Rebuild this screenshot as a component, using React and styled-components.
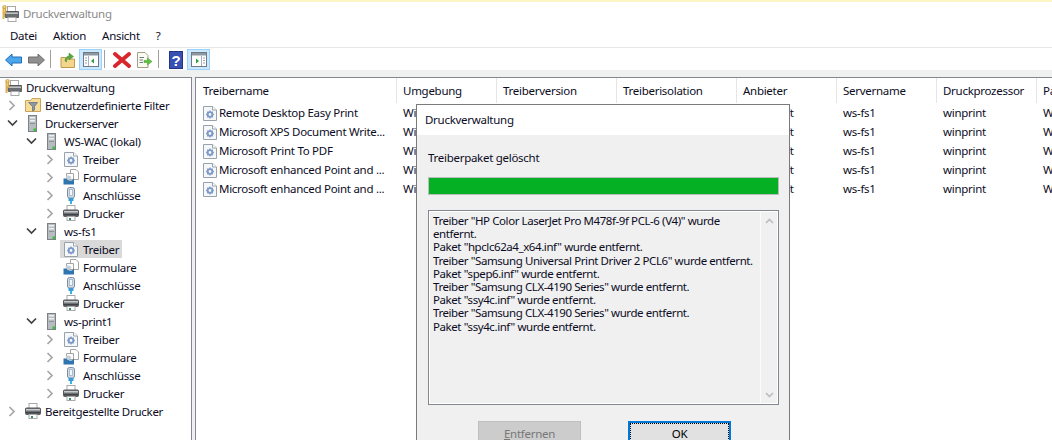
import React from 'react'
import styled, { createGlobalStyle } from 'styled-components'

const GlobalStyle = createGlobalStyle`
    html, body {
        margin: 0;
        padding: 0;
        width: 1052px;
        height: 440px;
        overflow: hidden;
        background: #f0f0f0;
        font-family: 'Noto Sans', 'Open Sans', sans-serif;
        font-size: 11.5px;
        letter-spacing: -0.28px;
        color: #0c0c1e;
    }
`

const Window = styled.div`
    position: relative;
    width: 1052px;
    height: 440px;
    overflow: hidden;
    display: flex;
    flex-direction: column;
    background: #f0f0f0;
    border-top: 2px solid #fdf5c4;
    box-sizing: border-box;
`

const TitleBar = styled.div`
    height: 23px;
    display: flex;
    align-items: center;
    gap: 4px;
    padding-left: 2px;
    background: #fff;
    color: #8a8a8a;
    flex: none;
`

const MenuBar = styled.div`
    height: 22px;
    display: flex;
    align-items: center;
    gap: 16px;
    padding-left: 10px;
    background: #fff;
    border-bottom: 1px solid #e6e6e6;
    flex: none;
`

const MenuItem = styled.span`
    line-height: 20px;
`

const ToolBar = styled.div`
    height: 22px;
    display: flex;
    align-items: flex-end;
    padding-left: 2px;
    background: #fff;
    flex: none;
`

const ToolButton = styled.div`
    width: 23px;
    height: 21px;
    display: flex;
    align-items: center;
    justify-content: center;
    box-sizing: border-box;
    background: ${props => (props.active ? '#cce8ff' : 'transparent')};
    border: 1px solid ${props => (props.active ? '#99d1ff' : 'transparent')};
`

const ToolSep = styled.div`
    width: 1px;
    height: 18px;
    margin: 0 5px 2px 2px;
    background: #a0a0a0;
`

const Panes = styled.div`
    flex: 1;
    display: flex;
    gap: 3px;
    padding-top: 7px;
    min-height: 0;
`

const TreePane = styled.div`
    width: 192px;
    flex: none;
    background: #fff;
    border: 1px solid #828790;
    border-left: 0;
    border-bottom: 0;
    box-sizing: border-box;
`

const TreeRow = styled.div`
    height: 18px;
    display: flex;
    align-items: center;
    padding-left: ${props => props.level * 19 + 5}px;
`

const Chevron = styled.div`
    width: 14px;
    height: 16px;
    margin-right: 6px;
    display: flex;
    align-items: center;
    justify-content: center;
    flex: none;
`

const TreeLabel = styled.div`
    display: flex;
    align-items: center;
    gap: 4px;
    height: 18px;
    padding-right: 3px;
    white-space: nowrap;
    background: ${props => (props.selected ? '#d9d9d9' : 'transparent')};
    margin-left: ${props => (props.selected ? '-3px' : '0')};
    padding-left: ${props => (props.selected ? '3px' : '0')};
`

const ListPane = styled.div`
    flex: 1;
    background: #fff;
    border-top: 1px solid #828790;
    border-left: 1px solid #828790;
    min-width: 0;
    overflow: hidden;
`

const ListRow = styled.div`
    display: grid;
    grid-template-columns: 200px 100px 120px 120px 100px 100px 100px 100px;
    height: ${props => (props.header ? '25px' : '19px')};
`

const HeadCell = styled.div`
    display: flex;
    align-items: center;
    padding-left: 7px;
    box-shadow: 1px 0 0 #e5e5e5;
    white-space: nowrap;
    overflow: hidden;
`

const Cell = styled.div`
    display: flex;
    align-items: center;
    gap: 1px;
    padding-left: ${props => (props.first ? '6px' : '7px')};
    padding-right: 2px;
    white-space: nowrap;
    overflow: hidden;
`

const Vendor = styled.span`
    letter-spacing: 0;
`

const Dialog = styled.div`
    position: absolute;
    left: 416px;
    top: 102px;
    width: 374px;
    height: 360px;
    box-sizing: border-box;
    background: #f0f0f0;
    border: 1px solid #7a7a7a;
    display: flex;
    flex-direction: column;
`

const DialogTitle = styled.div`
    height: 30px;
    background: #fff;
    display: flex;
    align-items: center;
    padding: 0 0 2px 8px;
    box-sizing: border-box;
    flex: none;
`

const DialogBody = styled.div`
    padding: 14px 10px 0 11px;
    display: flex;
    flex-direction: column;
`

const Status = styled.div`
    height: 18px;
    line-height: 17px;
`

const Progress = styled.div`
    height: 18px;
    margin-top: 10px;
    box-sizing: border-box;
    border: 1px solid #bcbcbc;
    background: #06b025;
`

const LogBox = styled.div`
    margin-top: 15px;
    height: 195px;
    box-sizing: border-box;
    border: 1px solid #828790;
    box-shadow: inset 0 0 0 1px #fff;
    display: flex;
    background: #f0f0f0;
`

const LogText = styled.div`
    flex: 1;
    padding: 3px 0 0 4px;
    line-height: 13.2px;
    letter-spacing: -0.42px;
`

const LogScroll = styled.div`
    width: 17px;
    box-sizing: border-box;
    margin: 1px 1px 1px 0;
    border-left: 1px solid #fbfbfb;
    display: flex;
    flex-direction: column;
    justify-content: space-between;
    align-items: center;
    padding: 6px 0 5px;
`

const Buttons = styled.div`
    display: flex;
    gap: 47px;
    margin-top: 16px;
    padding-left: 50px;
`

const Button = styled.div`
    width: 103px;
    height: 24px;
    box-sizing: border-box;
    display: flex;
    align-items: center;
    justify-content: center;
    background: ${props => (props.disabled ? '#cccccc' : '#e1e1e1')};
    color: ${props => (props.disabled ? '#787878' : '#000')};
    border: ${props => (props.primary ? '2px solid #0078d7' : '1px solid #bfbfbf')};
    outline: ${props => (props.primary ? '1px dotted #000' : 'none')};
    outline-offset: -3px;
`

const Mnemonic = styled.span`
    text-decoration: underline;
`

const ChevronRight = () => (
    <svg width="8" height="11" viewBox="0 0 8 11">
        <path d="M1.5 1 L6 5.5 L1.5 10" fill="none" stroke="#a6a6a6" strokeWidth="1.7" />
    </svg>
)

const ChevronDown = () => (
    <svg width="11" height="8" viewBox="0 0 11 8">
        <path d="M1 1.5 L5.5 6 L10 1.5" fill="none" stroke="#404040" strokeWidth="1.7" />
    </svg>
)

const ScrollArrow = ({ up }) => (
    <svg width="9" height="6" viewBox="0 0 9 6">
        <path d={up ? 'M1 5 L4.5 1.5 L8 5' : 'M1 1 L4.5 4.5 L8 1'} fill="none" stroke="#bdbdbd" strokeWidth="1.7" />
    </svg>
)

const DriverIcon = () => (
    <svg width="16" height="16" viewBox="0 0 16 16" style={{ flex: 'none' }}>
        <path d="M1.5 1.5 H10.5 L14.5 5 V15.5 H1.5 Z" fill="#f6f7f8" stroke="#98a2ac" />
        <path d="M10.5 1.5 V5 H14.5" fill="#fff" stroke="#98a2ac" />
        <circle cx="8" cy="9.5" r="2.3" fill="none" stroke="#7c9ac9" strokeWidth="1.8" />
        <path d="M8 5.6 V7 M8 12 V13.4 M4.1 9.5 H5.5 M10.5 9.5 H11.9 M5.3 6.8 L6.2 7.7 M9.8 11.3 L10.7 12.2 M10.7 6.8 L9.8 7.7 M6.2 11.3 L5.3 12.2" stroke="#7c9ac9" strokeWidth="1.3" />
    </svg>
)

const FormsIcon = () => (
    <svg width="16" height="16" viewBox="0 0 16 16" style={{ flex: 'none' }}>
        <path d="M7.5 0.5 H13 L15.5 3 V10.5 H7.5 Z" fill="#fff" stroke="#a5a5a5" />
        <path d="M3.5 4.5 H10.5 V10.5 H3.5 Z" fill="#fff" stroke="#a5a5a5" />
        <path d="M0.5 9.5 H4 L6 11.5 H9 L11 9.5 V15.5 H0.5 Z" fill="#2e75b0" />
        <path d="M2.5 8 C3.5 6 7 6 8.5 8.5 L6 11 H4.5 Z" fill="#c7cfd6" />
    </svg>
)

const PortIcon = () => (
    <svg width="16" height="17" viewBox="0 0 16 17" style={{ flex: 'none' }}>
        <rect x="4.5" y="0.5" width="7" height="10.5" rx="2" fill="#cfdbe8" stroke="#7d8ea3" />
        <rect x="6.5" y="2.5" width="3" height="6" fill="#f4f7fa" stroke="#9aa9ba" strokeWidth="0.7" />
        <rect x="5.5" y="11" width="5" height="3" fill="#3a9bd8" />
        <rect x="7" y="14" width="2" height="3" fill="#36b4e6" />
    </svg>
)

const PrinterIcon = () => (
    <svg width="16" height="16" viewBox="0 0 16 16" style={{ flex: 'none' }}>
        <rect x="4" y="0.5" width="8" height="5" fill="#fff" stroke="#a9a9a9" />
        <rect x="0.5" y="5" width="15" height="6.5" rx="1" fill="#6e7276" stroke="#54585c" />
        <rect x="1" y="6" width="14" height="1.5" fill="#c9ccce" />
        <rect x="1" y="9" width="14" height="1.5" fill="#3f4346" />
        <rect x="4" y="11.5" width="8" height="4" fill="#fff" stroke="#a9a9a9" />
        <rect x="6" y="13" width="2" height="2" fill="#2f8f6b" />
    </svg>
)

const ServerIcon = () => (
    <svg width="16" height="17" viewBox="0 0 16 17" style={{ flex: 'none' }}>
        <rect x="3.5" y="0.5" width="8" height="16" fill="#b7bcc1" stroke="#7c8185" />
        <rect x="5" y="2" width="5" height="1.5" fill="#eef0f1" />
        <rect x="5" y="5" width="5" height="1.5" fill="#eef0f1" />
        <rect x="5" y="8" width="5" height="1" fill="#8b9095" />
        <rect x="8.5" y="13.5" width="2.5" height="2.5" fill="#35c13a" />
    </svg>
)

const FilterFolderIcon = () => (
    <svg width="16" height="16" viewBox="0 0 16 16" style={{ flex: 'none' }}>
        <path d="M0.5 3.5 V14.5 H15.5 V1.5 H7 L5.5 3.5 Z" fill="#f7dd9a" stroke="#c8a45c" />
        <path d="M3.5 5.5 H12.5 L9.5 9.5 V13 L7.5 14 V9.5 Z" fill="#8a97a5" stroke="#5f6b78" strokeWidth="0.7" />
    </svg>
)

const AppIcon = () => (
    <svg width="17" height="17" viewBox="0 0 17 17" style={{ flex: 'none' }}>
        <rect x="5.5" y="1.5" width="8" height="5" fill="#fff" stroke="#a9a9a9" />
        <rect x="3" y="6.5" width="14" height="6" rx="1" fill="#6a6e72" stroke="#54585c" />
        <rect x="4" y="7.5" width="12" height="1.4" fill="#c9ccce" />
        <rect x="6" y="12.5" width="8" height="4" fill="#fff" stroke="#a9a9a9" />
        <path d="M1.5 1.5 V14" stroke="#e3b04a" strokeWidth="2" />
        <path d="M3.5 0.8 V9" stroke="#d9a43c" strokeWidth="1.5" />
        <circle cx="2.5" cy="2" r="1.6" fill="#f2d486" stroke="#b98a2d" strokeWidth="0.6" />
    </svg>
)

const ArrowIcon = ({ back }) => (
    <svg width="17" height="14" viewBox="0 0 17 14">
        {back ? (
            <path d="M0.5 7 L7 1 V4 H16.5 V10 H7 V13 Z" fill="#4ea6ea" stroke="#1e6fb8" />
        ) : (
            <path d="M16.5 7 L10 1 V4 H0.5 V10 H10 V13 Z" fill="#8f8f8f" stroke="#6f6f6f" />
        )}
    </svg>
)

const UpFolderIcon = () => (
    <svg width="15" height="16" viewBox="0 0 15 16">
        <path d="M1 5.5 H6 L7 7 H14.5 V15.5 H1 Z" fill="#f3d68c" stroke="#c09a4f" />
        <path d="M5 9 C5 6 7 4 9 4 V1 L13.5 4.5 L9 8 V6 C7.5 6 6.5 7.5 6.5 10 Z" fill="#58a83f" stroke="#3f8a2c" strokeWidth="0.5" />
    </svg>
)

const PaneIcon = ({ right }) => (
    <svg width="16" height="15" viewBox="0 0 16 15">
        <rect x="0.5" y="0.5" width="15" height="14" fill="#fdfdfd" stroke="#6f7a85" />
        <rect x="1" y="1" width="14" height="2.5" fill="#8d98a3" />
        <path d={right ? 'M10.5 4 V14' : 'M5.5 4 V14'} stroke="#a9b1b9" />
        <path d={right ? 'M5 6.5 L8 9 L5 11.5 Z' : 'M11 6.5 L8 9 L11 11.5 Z'} fill="#2e9e3f" />
        <path d={right ? 'M12 6 H14 M12 8.5 H14 M12 11 H14' : 'M2 6 H4 M2 8.5 H4 M2 11 H4'} stroke="#9aa4ae" />
    </svg>
)

const DeleteIcon = () => (
    <svg width="18" height="16" viewBox="0 0 18 16">
        <path d="M2 2 L16 14 M16 2 L2 14" stroke="#d9262a" strokeWidth="3.8" strokeLinecap="round" />
    </svg>
)

const ExportIcon = () => (
    <svg width="17" height="16" viewBox="0 0 17 16">
        <path d="M1.5 0.5 H9 L12 3.5 V15.5 H1.5 Z" fill="#fbfaf0" stroke="#a3a08a" />
        <path d="M3.5 5.5 H8 M3.5 8 H7 M3.5 10.5 H7" stroke="#6f7a85" />
        <path d="M8 8.5 H11.5 V6 L16 9.5 L11.5 13 V10.5 H8 Z" fill="#63bf3e" stroke="#3f9a2a" strokeWidth="0.5" />
    </svg>
)

const HelpIcon = () => (
    <svg width="14" height="18" viewBox="0 0 14 18">
        <rect x="0.5" y="0.5" width="13" height="17" fill="#3650b4" stroke="#26357f" />
        <text x="7" y="14.5" textAnchor="middle" fontSize="15" fontWeight="700" fill="#fff" fontFamily="Liberation Sans">?</text>
    </svg>
)

const icons = {
    driver: DriverIcon,
    forms: FormsIcon,
    port: PortIcon,
    printer: PrinterIcon,
    server: ServerIcon,
    filter: FilterFolderIcon,
    app: AppIcon
}

const serverChildren = [
    { label: 'Treiber', icon: 'driver' },
    { label: 'Formulare', icon: 'forms' },
    { label: 'Anschlüsse', icon: 'port' },
    { label: 'Drucker', icon: 'printer' }
]

const TreeItem = ({ level, state, icon, label, selected }) => {
    const Icon = icons[icon]
    return (
        <TreeRow level={level}>
            {state !== 'root' && (
                <Chevron>
                    {state === 'open' && <ChevronDown />}
                    {state === 'closed' && <ChevronRight />}
                </Chevron>
            )}
            <TreeLabel selected={selected}>
                <Icon />
                {label}
            </TreeLabel>
        </TreeRow>
    )
}

const drivers = [
    'Remote Desktop Easy Print',
    'Microsoft XPS Document Write...',
    'Microsoft Print To PDF',
    'Microsoft enhanced Point and ...',
    'Microsoft enhanced Point and ...'
]

const columns = [
    'Treibername',
    'Umgebung',
    'Treiberversion',
    'Treiberisolation',
    'Anbieter',
    'Servername',
    'Druckprozessor',
    'Pakettyp'
]

const logLines = [
    'Treiber "HP Color LaserJet Pro M478f-9f PCL-6 (V4)" wurde entfernt.',
    'Paket "hpclc62a4_x64.inf" wurde entfernt.',
    'Treiber "Samsung Universal Print Driver 2 PCL6" wurde entfernt.',
    'Paket "spep6.inf" wurde entfernt.',
    'Treiber "Samsung CLX-4190 Series" wurde entfernt.',
    'Paket "ssy4c.inf" wurde entfernt.',
    'Treiber "Samsung CLX-4190 Series" wurde entfernt.',
    'Paket "ssy4c.inf" wurde entfernt.'
]

const App = () => (
    <Window>
        <GlobalStyle />
        <TitleBar>
            <AppIcon />
            Druckverwaltung
        </TitleBar>
        <MenuBar>
            <MenuItem>Datei</MenuItem>
            <MenuItem>Aktion</MenuItem>
            <MenuItem>Ansicht</MenuItem>
            <MenuItem>?</MenuItem>
        </MenuBar>
        <ToolBar>
            <ToolButton><ArrowIcon back /></ToolButton>
            <ToolButton><ArrowIcon /></ToolButton>
            <ToolSep />
            <ToolButton><UpFolderIcon /></ToolButton>
            <ToolButton active><PaneIcon /></ToolButton>
            <ToolSep />
            <ToolButton><DeleteIcon /></ToolButton>
            <ToolButton><ExportIcon /></ToolButton>
            <ToolSep />
            <ToolButton><HelpIcon /></ToolButton>
            <ToolButton active><PaneIcon right /></ToolButton>
        </ToolBar>
        <Panes>
            <TreePane>
                <TreeItem level={0} state="root" icon="app" label="Druckverwaltung" />
                <TreeItem level={0} state="closed" icon="filter" label="Benutzerdefinierte Filter" />
                <TreeItem level={0} state="open" icon="server" label="Druckerserver" />
                <TreeItem level={1} state="open" icon="server" label="WS-WAC (lokal)" />
                {serverChildren.map(c => (
                    <TreeItem key={c.label} level={2} state="closed" {...c} />
                ))}
                <TreeItem level={1} state="open" icon="server" label="ws-fs1" />
                {serverChildren.map((c, i) => (
                    <TreeItem key={c.label} level={2} state="none" {...c} selected={i === 0} />
                ))}
                <TreeItem level={1} state="open" icon="server" label="ws-print1" />
                {serverChildren.map(c => (
                    <TreeItem key={c.label} level={2} state="closed" {...c} />
                ))}
                <TreeItem level={0} state="closed" icon="printer" label="Bereitgestellte Drucker" />
            </TreePane>
            <ListPane>
                <ListRow header>
                    {columns.map(c => (
                        <HeadCell key={c}>{c}</HeadCell>
                    ))}
                </ListRow>
                {drivers.map((name, i) => (
                    <ListRow key={i}>
                        <Cell first><DriverIcon />{name}</Cell>
                        <Cell>Windows x64</Cell>
                        <Cell />
                        <Cell />
                        <Cell><Vendor>Microsoft</Vendor></Cell>
                        <Cell>ws-fs1</Cell>
                        <Cell>winprint</Cell>
                        <Cell>Windows</Cell>
                    </ListRow>
                ))}
            </ListPane>
        </Panes>
        <Dialog>
            <DialogTitle>Druckverwaltung</DialogTitle>
            <DialogBody>
                <Status>Treiberpaket gelöscht</Status>
                <Progress />
                <LogBox>
                    <LogText>
                        {logLines.map((line, i) => (
                            <div key={i}>{line}</div>
                        ))}
                    </LogText>
                    <LogScroll>
                        <ScrollArrow up />
                        <ScrollArrow />
                    </LogScroll>
                </LogBox>
                <Buttons>
                    <Button disabled><span><Mnemonic>E</Mnemonic>ntfernen</span></Button>
                    <Button primary>OK</Button>
                </Buttons>
            </DialogBody>
        </Dialog>
    </Window>
)

export default App
